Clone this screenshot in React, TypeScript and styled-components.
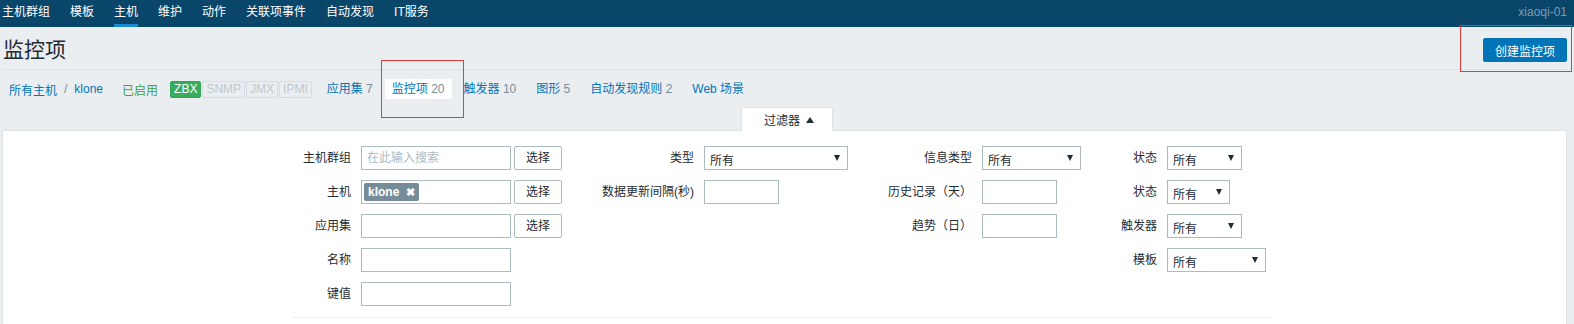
import React from 'react';
import styled, { createGlobalStyle } from 'styled-components';

const FONT = `"Liberation Sans", Arial, "Noto Sans CJK SC", sans-serif`;

const GlobalStyle = createGlobalStyle`
  html, body {
    margin: 0;
    padding: 0;
    background: #ebeef0;
    font-family: ${FONT};
    font-size: 12px;
    color: #1f2c33;
  }
  * { box-sizing: border-box; }
`;

const Page = styled.div`
  position: relative;
  width: 1574px;
  height: 324px;
  overflow: hidden;
`;

// top navigation
const TopNav = styled.div`
  height: 27px;
  background: #0a466a;
  display: flex;
  justify-content: space-between;
  padding: 0 7px 0 2px;
`;

const NavList = styled.div`
  display: flex;
  gap: 20px;
`;

const NavItem = styled.div<{ active?: boolean }>`
  height: 27px;
  line-height: 24px;
  color: #ffffff;
  border-bottom: 3px solid ${p => (p.active ? '#1a8ad2' : 'transparent')};
  white-space: nowrap;
`;

const User = styled.div`
  line-height: 24px;
  color: #7f9bb0;
`;

// header
const Header = styled.div`
  margin: 0 7px 0 2px;
  padding: 11px 0 7px 1px;
  display: flex;
  justify-content: space-between;
  align-items: center;
  border-bottom: 1px solid #dde2e5;
`;

const Title = styled.h1`
  margin: 0;
  font-size: 21px;
  font-weight: normal;
  line-height: 24px;
  color: #1f2c33;
`;

const CreateButton = styled.button`
  width: 84px;
  height: 24px;
  border: none;
  border-radius: 2px;
  background: #0275b8;
  color: #ffffff;
  font-family: ${FONT};
  font-size: 12px;
  padding: 0;
`;

// object navigation row
const ObjRow = styled.div`
  margin: 0 7px 0 2px;
  padding: 9px 0 8px 7px;
  display: flex;
  align-items: center;
  height: 37px;
`;

const Link = styled.span`
  color: #0275b8;
`;

const Count = styled.span`
  color: #768d99;
`;

const Slash = styled.span`
  color: #768d99;
  margin: 0 7px;
`;

const Enabled = styled.span`
  color: #429e47;
  margin-left: 19px;
`;

const TagGroup = styled.div`
  display: flex;
  gap: 1px;
  margin-left: 12px;
  margin-right: 3px;
`;

const Tag = styled.span<{ on?: boolean }>`
  display: inline-block;
  height: 17px;
  line-height: 15px;
  padding: 0 3px;
  border: 1px solid ${p => (p.on ? '#34a35a' : '#d5dbe0')};
  border-radius: 2px;
  background: ${p => (p.on ? '#3aac5d' : '#ebeef0')};
  color: ${p => (p.on ? '#ffffff' : '#bfc7cd')};
  font-size: 12px;
`;

const TabItem = styled.div<{ active?: boolean; gap?: number }>`
  height: 20px;
  line-height: 20px;
  padding: 0 7px;
  margin-left: ${p => p.gap ?? 5}px;
  background: ${p => (p.active ? '#ffffff' : 'transparent')};
  white-space: nowrap;
`;

// filter
const FilterTab = styled.div`
  position: relative;
  z-index: 1;
  width: 92px;
  height: 24px;
  margin: 0 auto -1px;
  background: #ffffff;
  border: 1px solid #dde2e5;
  border-bottom: none;
  display: flex;
  align-items: center;
  justify-content: center;
  gap: 6px;
  padding-left: 4px;
`;

const UpArrow = styled.span`
  width: 0;
  height: 0;
  border-left: 4px solid transparent;
  border-right: 4px solid transparent;
  border-bottom: 6px solid #1f2c33;
`;

const Panel = styled.div`
  margin: 0 7px 0 2px;
  background: #ffffff;
  border: 1px solid #dde2e5;
  border-bottom: none;
  height: 194px;
  padding-top: 15px;
`;

const Form = styled.div`
  width: 979px;
  margin-left: 290px;
`;

const Columns = styled.div`
  display: flex;
  align-items: flex-start;
`;

const Column = styled.div<{ labelW: number; fieldW: number }>`
  display: grid;
  grid-template-columns: ${p => p.labelW}px ${p => p.fieldW}px;
  grid-auto-rows: 24px;
  column-gap: 10px;
  row-gap: 10px;
`;

const Label = styled.div`
  text-align: right;
  line-height: 24px;
  white-space: nowrap;
  color: #1f2c33;
`;

const Field = styled.div`
  display: flex;
  gap: 3px;
  align-items: center;
`;

const TextBox = styled.div<{ w: number }>`
  width: ${p => p.w}px;
  height: 24px;
  border: 1px solid #acbbc2;
  background: #ffffff;
  padding: 0 5px;
  line-height: 22px;
  display: flex;
  align-items: center;
`;

const Placeholder = styled.span`
  color: #acbbc2;
`;

const SelectButton = styled.div`
  width: 48px;
  height: 24px;
  border: 1px solid #acbbc2;
  border-radius: 2px;
  background: #ffffff;
  text-align: center;
  line-height: 22px;
  color: #1f2c33;
`;

const Chip = styled.span`
  display: inline-flex;
  align-items: center;
  gap: 7px;
  height: 18px;
  padding: 0 4px;
  margin-left: -3px;
  border-radius: 2px;
  background: #768d99;
  color: #ffffff;
  font-weight: bold;
`;

const ChipX = styled.span`
  font-size: 11px;
  line-height: 18px;
`;

const Select = styled.div<{ w: number }>`
  width: ${p => p.w}px;
  height: 24px;
  border: 1px solid #acbbc2;
  background: #ffffff;
  display: flex;
  align-items: center;
  justify-content: space-between;
  padding: 2px 7px 0 5px;
`;

const DownArrow = styled.span`
  width: 0;
  height: 0;
  margin-top: -3px;
  border-left: 3px solid transparent;
  border-right: 3px solid transparent;
  border-top: 6px solid #1f2c33;
`;

const Divider = styled.div`
  margin-top: 11px;
  height: 1px;
  background: #ebeef0;
`;

// red annotation boxes drawn over the screenshot
const Mark = styled.div`
  position: absolute;
  border: 1px solid #e8393d;
  pointer-events: none;
`;

const Sel: React.FC<{ w: number }> = ({ w }) => (
  <Select w={w}>
    <span>所有</span>
    <DownArrow />
  </Select>
);

const navItems = ['主机群组', '模板', '主机', '维护', '动作', '关联项事件', '自动发现', 'IT服务'];

const App: React.FC = () => {
  return (
    <Page>
      <GlobalStyle />
      <TopNav>
        <NavList>
          {navItems.map(n => (
            <NavItem key={n} active={n === '主机'}>{n}</NavItem>
          ))}
        </NavList>
        <User>xiaoqi-01</User>
      </TopNav>

      <Header>
        <Title>监控项</Title>
        <CreateButton>创建监控项</CreateButton>
      </Header>

      <ObjRow>
        <Link>所有主机</Link>
        <Slash>/</Slash>
        <Link>klone</Link>
        <Enabled>已启用</Enabled>
        <TagGroup>
          <Tag on>ZBX</Tag>
          <Tag>SNMP</Tag>
          <Tag>JMX</Tag>
          <Tag>IPMI</Tag>
        </TagGroup>
        <TabItem><Link>应用集</Link> <Count>7</Count></TabItem>
        <TabItem active><Link>监控项</Link> <Count>20</Count></TabItem>
        <TabItem><Link>触发器</Link> <Count>10</Count></TabItem>
        <TabItem gap={6}><Link>图形</Link> <Count>5</Count></TabItem>
        <TabItem gap={6}><Link>自动发现规则</Link> <Count>2</Count></TabItem>
        <TabItem gap={6}><Link>Web 场景</Link></TabItem>
      </ObjRow>

      <FilterTab>
        <span>过滤器</span>
        <UpArrow />
      </FilterTab>
      <Panel>
        <Form>
          <Columns>
            <Column labelW={58} fieldW={201}>
              <Label>主机群组</Label>
              <Field>
                <TextBox w={150}><Placeholder>在此输入搜索</Placeholder></TextBox>
                <SelectButton>选择</SelectButton>
              </Field>
              <Label>主机</Label>
              <Field>
                <TextBox w={150}>
                  <Chip>klone<ChipX>✖</ChipX></Chip>
                </TextBox>
                <SelectButton>选择</SelectButton>
              </Field>
              <Label>应用集</Label>
              <Field>
                <TextBox w={150} />
                <SelectButton>选择</SelectButton>
              </Field>
              <Label>名称</Label>
              <Field><TextBox w={150} /></Field>
              <Label>键值</Label>
              <Field><TextBox w={150} /></Field>
            </Column>
            <Column labelW={132} fieldW={144}>
              <Label>类型</Label>
              <Field><Sel w={144} /></Field>
              <Label>数据更新间隔(秒)</Label>
              <Field><TextBox w={75} /></Field>
            </Column>
            <Column labelW={124} fieldW={99}>
              <Label>信息类型</Label>
              <Field><Sel w={99} /></Field>
              <Label>历史记录（天）</Label>
              <Field><TextBox w={75} /></Field>
              <Label>趋势（日）</Label>
              <Field><TextBox w={75} /></Field>
            </Column>
            <Column labelW={76} fieldW={105}>
              <Label>状态</Label>
              <Field><Sel w={75} /></Field>
              <Label>状态</Label>
              <Field><Sel w={63} /></Field>
              <Label>触发器</Label>
              <Field><Sel w={75} /></Field>
              <Label>模板</Label>
              <Field><Sel w={99} /></Field>
            </Column>
          </Columns>
          <Divider />
        </Form>
      </Panel>

      <Mark style={{ left: 381, top: 60, width: 83, height: 58 }} />
      <Mark style={{ left: 1460, top: 25, width: 112, height: 47 }} />
    </Page>
  );
};

export default App;
